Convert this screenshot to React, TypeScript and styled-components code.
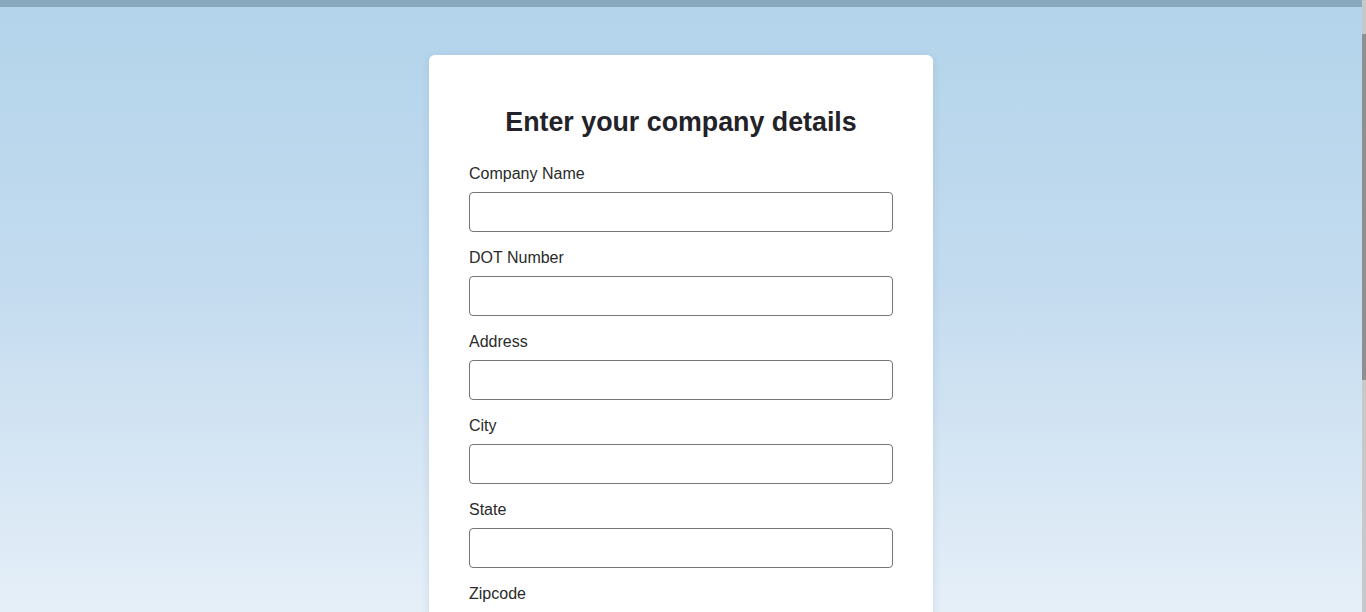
import { createGlobalStyle, styled } from 'styled-components';

const GlobalStyle = createGlobalStyle`
  html, body {
    margin: 0;
    padding: 0;
    height: 612px;
    overflow: hidden;
  }
  body {
    font-family: "Liberation Sans", Arial, sans-serif;
    color: #222;
  }
  * {
    box-sizing: border-box;
  }
`;

const fields = ['Company Name', 'DOT Number', 'Address', 'City', 'State', 'Zipcode'];

const App = () => {
  return (
    <>
      <GlobalStyle />
      <Shell>
        <Viewport>
          <TopBar />
          <Main>
            <Card>
              <Title>Enter your company details</Title>
              <form onSubmit={(e) => e.preventDefault()}>
                {fields.map((name) => (
                  <Field key={name}>
                    <Label htmlFor={name}>{name}</Label>
                    <Input id={name} type="text" />
                  </Field>
                ))}
              </form>
            </Card>
          </Main>
        </Viewport>
        <ScrollTrack>
          <ScrollThumb />
        </ScrollTrack>
      </Shell>
    </>
  );
};

const Shell = styled.div`
  display: flex;
  width: 1366px;
  height: 612px;
  overflow: hidden;
`;

const Viewport = styled.div`
  flex: 1;
  display: flex;
  flex-direction: column;
  min-width: 0;
`;

const TopBar = styled.div`
  height: 7px;
  flex-shrink: 0;
  background: #88a9be;
`;

const Main = styled.main`
  flex: 1;
  display: flex;
  justify-content: center;
  align-items: flex-start;
  padding-top: 48px;
  overflow: hidden;
  background: linear-gradient(180deg, #b3d4eb 0%, #c3dbef 45%, #e5eff8 100%);
`;

const Card = styled.div`
  width: 504px;
  flex-shrink: 0;
  background: #ffffff;
  border-radius: 6px;
  padding: 52px 40px 40px;
  box-shadow: 0 2px 8px rgba(40, 70, 100, 0.12);
`;

const Title = styled.h1`
  margin: 0 0 27px;
  font-size: 26.8px;
  line-height: 31px;
  font-weight: bold;
  text-align: center;
  color: #222228;
`;

const Field = styled.div`
  margin-bottom: 17px;
`;

const Label = styled.label`
  display: block;
  font-size: 16px;
  line-height: 18px;
  margin-bottom: 9px;
  color: #2a2a2a;
`;

const Input = styled.input`
  display: block;
  width: 100%;
  height: 40px;
  border: 1px solid #767676;
  border-radius: 4px;
  padding: 0 10px;
  font-family: inherit;
  font-size: 16px;
  background: #fff;
  outline: none;
`;

const ScrollTrack = styled.div`
  width: 4px;
  flex-shrink: 0;
  background: #c8c8c8;
`;

const ScrollThumb = styled.div`
  margin-top: 34px;
  height: 346px;
  background: #8f8f8f;
`;

export default App;
